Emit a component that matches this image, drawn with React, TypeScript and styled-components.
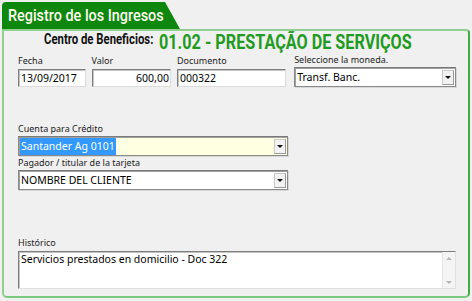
import React from "react";
import styled, { createGlobalStyle } from "styled-components";

const Global = createGlobalStyle`
  html, body { margin: 0; padding: 0; background: #f0f0f0; }
  body { width: 472px; height: 301px; overflow: hidden; }
`;

const Page = styled.div`
  padding: 2px 2px 0 2px;
  display: flex;
  flex-direction: column;
`;

const Tab = styled.div`
  width: 178px;
  height: 27px;
  background: #0e870e;
  border-top-left-radius: 4px;
  clip-path: polygon(0 0, 163px 0, 178px 100%, 0 100%);
  display: flex;
  align-items: center;
  padding-left: 6px;
  box-sizing: border-box;
  overflow: hidden;
  font-family: Roboto, "DejaVu Sans", sans-serif;
  font-weight: 500;
  font-size: 16px;
  color: #fffff0;
`;

const Squeeze = styled.span<{ $k: number }>`
  display: inline-block;
  white-space: nowrap;
  transform: scaleX(${(p) => p.$k});
  transform-origin: left center;
`;

const Panel = styled.div`
  height: 269px;
  box-sizing: border-box;
  border: 2px solid #8fd08f;
  border-right-color: #3fae3f;
  border-bottom-color: #7cc87c;
  border-radius: 0 4px 5px 5px;
  padding: 0 12px 0 14px;
  display: flex;
  flex-direction: column;
`;

const Header = styled.div`
  display: flex;
  align-items: flex-start;
  padding-left: 26px;
  height: 22px;
`;

const HeaderLabel = styled.div`
  width: 115px;
  height: 16px;
  font-family: Roboto, "DejaVu Sans", sans-serif;
  font-weight: bold;
  font-size: 14px;
  line-height: 16px;
  color: #111;
`;

const HeaderValue = styled.div`
  width: 260px;
  font-family: Roboto, "DejaVu Sans", sans-serif;
  font-weight: bold;
  font-size: 20px;
  line-height: 22px;
  color: #1f9b1f;
`;

const Row = styled.div<{ $mt?: number }>`
  display: flex;
  gap: 6px;
  margin-top: ${(p) => p.$mt ?? 0}px;
  align-items: flex-end;
`;

const Field = styled.div<{ $w: number; $gap?: number; $ml?: number }>`
  width: ${(p) => p.$w}px;
  margin-left: ${(p) => p.$ml ?? 0}px;
  display: flex;
  flex-direction: column;
  gap: ${(p) => p.$gap ?? 2}px;
`;

const Label = styled.div`
  font-family: "Noto Sans", "Open Sans", sans-serif;
  font-size: 9px;
  line-height: 12px;
  color: #222;
  white-space: nowrap;
`;

const Box = styled.div<{ $align?: string }>`
  height: 18px;
  box-sizing: border-box;
  background: #fff;
  border-style: solid;
  border-width: 1px;
  border-color: #7d7d7d #dcdcdc #dcdcdc #7d7d7d;
  box-shadow: inset 1px 1px 0 #c4c4c4;
  font-family: "Noto Sans", "Open Sans", sans-serif;
  font-size: 10.5px;
  color: #000;
  display: flex;
  align-items: center;
  justify-content: ${(p) => p.$align ?? "flex-start"};
  padding: 0 1px 0 2px;
  white-space: nowrap;
  overflow: hidden;
`;

const Select = styled.div<{ $bg?: string }>`
  height: 20px;
  box-sizing: border-box;
  background: ${(p) => p.$bg ?? "#fff"};
  border: 1px solid #8a8a8a;
  border-top-color: #7a7a7a;
  box-shadow: inset 1px 1px 0 #a0a0a0, 1px 1px 0 #d8d8d8;
  font-family: "Noto Sans", "Open Sans", sans-serif;
  font-size: 10.5px;
  color: #000;
  display: flex;
  align-items: center;
  padding: 1px;
`;

const SelectText = styled.div<{ $sel?: boolean }>`
  flex: 1;
  height: 100%;
  display: flex;
  align-items: center;
  white-space: nowrap;
  & > span {
    background: ${(p) => (p.$sel ? "#3399ff" : "transparent")};
    color: ${(p) => (p.$sel ? "#fff" : "#000")};
    padding: 1px 1px;
    line-height: 15px;
  }
`;

const DropBtn = styled.div`
  width: 12px;
  height: 15px;
  box-sizing: border-box;
  background: #f2f2f2;
  border: 1px solid #c8c8c8;
  border-right-color: #9a9a9a;
  border-bottom-color: #9a9a9a;
  display: flex;
  align-items: center;
  justify-content: center;
  &::after {
    content: "";
    border-left: 3px solid transparent;
    border-right: 3px solid transparent;
    border-top: 3px solid #111;
    margin-top: 1px;
  }
`;

const TextArea = styled.div`
  height: 38px;
  box-sizing: border-box;
  background: #fff;
  border-style: solid;
  border-width: 1px;
  border-color: #7d7d7d #e0e0e0 #e0e0e0 #7d7d7d;
  box-shadow: inset 1px 1px 0 #c4c4c4;
  display: flex;
  font-family: "Noto Sans", "Open Sans", sans-serif;
  font-size: 10.5px;
  color: #000;
`;

const AreaText = styled.div`
  flex: 1;
  padding: 0 1px 0 2px;
  line-height: 15px;
`;

const ScrollBar = styled.div`
  width: 12px;
  background: #f4f4f4;
  border-left: 1px solid #e6e6e6;
  display: flex;
  flex-direction: column;
  justify-content: space-between;
  align-items: center;
  padding: 5px 0 4px;
`;

const Arrow = styled.div<{ $up?: boolean }>`
  border-left: 3px solid transparent;
  border-right: 3px solid transparent;
  ${(p) => (p.$up ? "border-bottom: 3px solid #b5b5b5;" : "border-top: 3px solid #b5b5b5;")}
`;

export default function App() {
  return (
    <Page>
      <Global />
      <Tab>
        <Squeeze $k={0.9}>Registro de los Ingresos</Squeeze>
      </Tab>
      <Panel>
        <Header>
          <HeaderLabel>
            <Squeeze $k={0.81}>Centro de Beneficios:</Squeeze>
          </HeaderLabel>
          <HeaderValue>
            <Squeeze $k={0.81}>01.02 - PRESTAÇÃO DE SERVIÇOS</Squeeze>
          </HeaderValue>
        </Header>
        <Row $mt={1}>
          <Field $w={68}>
            <Label>Fecha</Label>
            <Box>13/09/2017</Box>
          </Field>
          <Field $w={80}>
            <Label>Valor</Label>
            <Box $align="flex-end">600,00</Box>
          </Field>
          <Field $w={110}>
            <Label>Documento</Label>
            <Box>000322</Box>
          </Field>
          <Field $w={163} $gap={1} $ml={2}>
            <Label>Seleccione la moneda.</Label>
            <Select>
              <SelectText><span>Transf. Banc.</span></SelectText>
              <DropBtn />
            </Select>
          </Field>
        </Row>
        <Row $mt={36}>
          <Field $w={270} $gap={1}>
            <Label>Cuenta para Crédito</Label>
            <Select $bg="#ffffe1">
              <SelectText $sel><span>Santander Ag 0101</span></SelectText>
              <DropBtn />
            </Select>
          </Field>
        </Row>
        <Row $mt={1}>
          <Field $w={270} $gap={1}>
            <Label>Pagador / titular de la tarjeta</Label>
            <Select>
              <SelectText><span>NOMBRE DEL CLIENTE</span></SelectText>
              <DropBtn />
            </Select>
          </Field>
        </Row>
        <Row $mt={47}>
          <Field $w={440} $gap={2}>
            <Label>Histórico</Label>
            <TextArea>
              <AreaText>Servicios prestados en domicilio - Doc 322</AreaText>
              <ScrollBar>
                <Arrow $up />
                <Arrow />
              </ScrollBar>
            </TextArea>
          </Field>
        </Row>
      </Panel>
    </Page>
  );
}
